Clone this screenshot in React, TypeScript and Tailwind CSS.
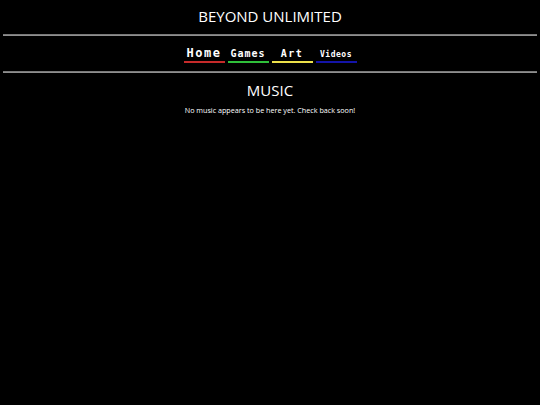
const navItems = [
  { label: 'Home', bar: 'bg-[#c62a2a]', text: 'text-[12px] tracking-[1.5px]' },
  { label: 'Games', bar: 'bg-[#2fbf3a]', text: 'text-[10px] tracking-[1px]' },
  { label: 'Art', bar: 'bg-[#ece04a]', text: 'text-[10px] tracking-[1.5px]' },
  { label: 'Videos', bar: 'bg-[#1414a8]', text: 'text-[8px] tracking-[0.5px]' },
];

function Rule() {
  return <div className="mx-[3px] h-[2px] bg-gradient-to-b from-[#6e6e6e] to-[#9a9a9a]" />;
}

export default function App() {
  return (
    <div className="min-h-[405px] w-full bg-black text-white" style={{ fontFamily: '"Open Sans", "Liberation Sans", sans-serif' }}>
      <header className="flex h-[34px] items-center justify-center pb-[1px]">
        <h1 className="text-[15px] leading-none">BEYOND UNLIMITED</h1>
      </header>
      <Rule />
      <nav className="flex h-[35px] items-end justify-center gap-[3px] pb-[8px]">
        {navItems.map(item => (
          <a key={item.label} href="#" className="flex w-[41px] flex-col items-center">
            <span
              className={`${item.text} font-bold leading-none`}
              style={{ fontFamily: '"DejaVu Sans Mono", "Liberation Mono", monospace' }}
            >
              {item.label}
            </span>
            <span className={`mt-[2px] block h-[2px] w-full ${item.bar}`} />
          </a>
        ))}
      </nav>
      <Rule />
      <main className="flex flex-col items-center pt-[8px]">
        <h2 className="text-[15px] leading-[18px]">MUSIC</h2>
        <p className="mt-[8px] text-[7.2px] leading-none">No music appears to be here yet. Check back soon!</p>
      </main>
    </div>
  );
}
